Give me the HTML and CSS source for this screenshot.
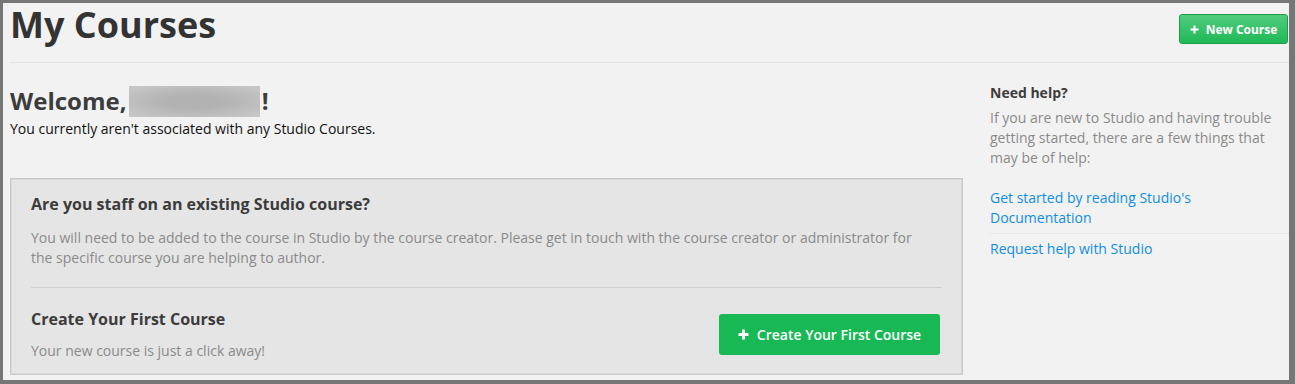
FILE: index.html
```html
<!DOCTYPE html>
<html lang="en">
<head>
  <meta charset="UTF-8">
  <title>My Courses</title>
  <link rel="stylesheet" href="styles.css">
</head>
<body>
  <div class="frame">
    <header class="page-header">
      <h1 class="title">My Courses</h1>
      <a class="btn-new" href="#">
        <svg class="plus" viewBox="0 0 10 10" width="9" height="9"><path d="M5 0.5v9M0.5 5h9" stroke="#fff" stroke-width="2.4"/></svg>
        New Course
      </a>
    </header>

    <div class="content">
      <div class="main">
        <h2 class="welcome">Welcome, <span class="blur"></span>!</h2>
        <p class="intro">You currently aren't associated with any Studio Courses.</p>

        <div class="notice">
          <div class="notice-section">
            <h3>Are you staff on an existing Studio course?</h3>
            <p>You will need to be added to the course in Studio by the course creator. Please get in touch with the course creator or administrator for the specific course you are helping to author.</p>
          </div>
          <div class="notice-section notice-create">
            <div>
              <h3>Create Your First Course</h3>
              <p class="create-text">Your new course is just a click away!</p>
            </div>
            <a class="btn-create" href="#">
              <svg class="plus" viewBox="0 0 10 10" width="11" height="11"><path d="M5 0.5v9M0.5 5h9" stroke="#fff" stroke-width="2.6"/></svg>
              Create Your First Course
            </a>
          </div>
        </div>
      </div>

      <aside class="sidebar">
        <h4>Need help?</h4>
        <p>If you are new to Studio and having trouble getting started, there are a few things that may be of help:</p>
        <ul class="help-links">
          <li><a href="#">Get started by reading Studio's Documentation</a></li>
          <li><a href="#">Request help with Studio</a></li>
        </ul>
      </aside>
    </div>
  </div>
</body>
</html>
```

FILE: styles.css
```css
body {
  margin: 0;
  background-color: #767676;
  font-family: "Open Sans", "Liberation Sans", sans-serif;
}

.frame {
  margin: 3px 6px 4px 3px;
  height: 377px;
  background-color: #f2f2f2;
  padding-left: 7px;
  color: #3c3c3c;
}

.page-header {
  display: flex;
  justify-content: space-between;
  align-items: flex-start;
  height: 59px;
  border-bottom: 1px solid #e2e2e2;
}

.title {
  margin: 0;
  font-size: 36px;
  line-height: 44px;
  font-weight: 700;
  color: #333;
}

.btn-new {
  margin: 11px 1px 0 0;
  height: 30px;
  box-sizing: border-box;
  width: 109px;
  display: flex;
  align-items: center;
  justify-content: center;
  gap: 7px;
  border: 1px solid #1a9f48;
  border-radius: 3px;
  background: linear-gradient(#52cb7d, #1fb857);
  color: #fff;
  font-size: 12px;
  font-weight: 700;
  text-decoration: none;
}

.content {
  display: flex;
}

.main {
  width: 953px;
  flex: none;
}

.welcome {
  margin: 23px 0 0;
  font-size: 24px;
  line-height: 30px;
  font-weight: 700;
  color: #3c3c3c;
}

.blur {
  display: inline-block;
  width: 131px;
  height: 31px;
  vertical-align: -7px;
  margin-left: -4px;
  margin-right: 2px;
  background: radial-gradient(ellipse at center, #b2b2b2 30%, #c6c6c6 90%);
}

.intro {
  margin: 2px 0 0;
  font-size: 14px;
  line-height: 20px;
  color: #111;
}

.notice {
  margin-top: 39px;
  border: 1px solid #c9c9c9;
  box-shadow: inset 0 0 0 1px #d8d8d8;
  background-color: #e5e5e5;
  padding: 0 20px;
}

.notice-section h3 {
  margin: 0;
  font-size: 16px;
  line-height: 22px;
  font-weight: 700;
  color: #3c3c3c;
}

.notice-section p {
  margin: 13px 8px 0 0;
  font-size: 14px;
  line-height: 20px;
  color: #8a8a8a;
}

.notice-section:first-child {
  padding: 14px 0 19px;
  border-bottom: 1px solid #cfcfcf;
}

.notice-create {
  display: flex;
  justify-content: space-between;
  align-items: center;
  padding: 20px 2px 13px 0;
}

.notice-section .create-text {
  margin-top: 11px;
}

.btn-create {
  width: 221px;
  height: 41px;
  display: flex;
  align-items: center;
  justify-content: center;
  gap: 8px;
  border-radius: 3px;
  background-color: #18b955;
  color: #fff;
  font-size: 14px;
  font-weight: 600;
  text-decoration: none;
}

.sidebar {
  margin-left: 27px;
  flex: 1;
}

.sidebar h4 {
  margin: 20px 0 0;
  font-size: 14px;
  line-height: 20px;
  font-weight: 700;
  color: #3c3c3c;
}

.sidebar p {
  margin: 5px 0 0;
  font-size: 14px;
  line-height: 20px;
  color: #8a8a8a;
}

.help-links {
  list-style: none;
  margin: 20px 0 0;
  padding: 0;
  font-size: 14px;
  line-height: 20px;
}

.help-links li {
  padding-bottom: 5px;
}

.help-links li + li {
  padding-top: 5px;
  border-top: 1px dotted #dcdcdc;
}

.help-links a {
  color: #0f8ee3;
  text-decoration: none;
}
```
